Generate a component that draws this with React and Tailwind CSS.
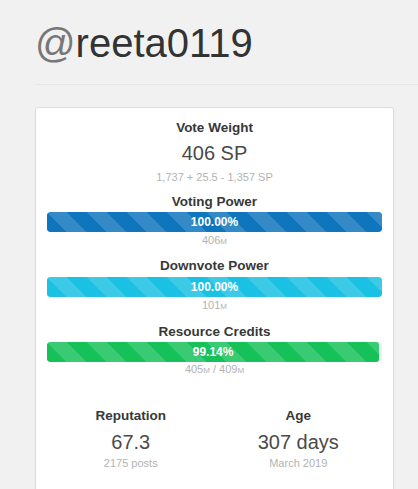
import React from "react";

const stripe =
  "bg-[image:linear-gradient(45deg,rgba(255,255,255,.15)_25%,transparent_25%,transparent_50%,rgba(255,255,255,.15)_50%,rgba(255,255,255,.15)_75%,transparent_75%,transparent)] bg-[length:40px_40px]";

function Bar({ pct, color, track, label }) {
  return (
    <div className={`h-[20px] w-full rounded-[3px] overflow-hidden ${track}`}>
      <div
        className={`h-full rounded-[3px] ${color} ${stripe} text-white text-[12px] font-bold leading-[20px] text-center`}
        style={{ width: pct + "%" }}
      >
        {label}
      </div>
    </div>
  );
}

function M() {
  return <span className="text-[8px]">M</span>;
}

export default function App() {
  return (
    <div
      className="min-h-[489px] bg-[#f1f1f1] pl-[35px] overflow-hidden"
      style={{ fontFamily: '"Liberation Sans", Arial, Helvetica, sans-serif' }}
    >
      <div className="pt-[21px] pb-[19px] border-b border-[#e6e6e6]">
        <h1 className="text-[40px] leading-[44px] text-[#333]">
          <span className="text-[#777]">@</span>reeta0119
        </h1>
      </div>
      <div className="mt-[22px] w-[359px] bg-white border border-[#dcdcdc] rounded-[3px] shadow-[0_1px_2px_rgba(0,0,0,0.06)] px-[11px] pt-[11px] pb-[40px] text-center">
        <div className="text-[13.5px] font-bold leading-[18px] text-[#383838]">Vote Weight</div>
        <div className="mt-[4px] text-[20px] leading-[24px] text-[#4a4a4a]">406 SP</div>
        <div className="mt-[5px] text-[11px] leading-[14px] text-[#b3b3b3]">1,737 + 25.5 - 1,357 SP</div>

        <div className="mt-[9px] text-[13.5px] font-bold leading-[18px] text-[#383838]">Voting Power</div>
        <div className="mt-[1px]">
          <Bar pct={100} color="bg-[#0f76bd]" track="bg-[#f5f5f5]" label="100.00%" />
        </div>
        <div className="mt-[1px] text-[11px] leading-[14px] text-[#b3b3b3]">
          406<M />
        </div>

        <div className="mt-[8px] text-[13.5px] font-bold leading-[18px] text-[#383838]">Downvote Power</div>
        <div className="mt-[2px]">
          <Bar pct={100} color="bg-[#1bc1e3]" track="bg-[#f5f5f5]" label="100.00%" />
        </div>
        <div className="mt-[1px] text-[11px] leading-[14px] text-[#b3b3b3]">
          101<M />
        </div>

        <div className="mt-[9px] text-[13.5px] font-bold leading-[18px] text-[#383838]">Resource Credits</div>
        <div className="mt-[1px]">
          <Bar pct={99.14} color="bg-[#16c15a]" track="bg-[#e3f7ea]" label="99.14%" />
        </div>
        <div className="text-[11px] leading-[14px] text-[#b3b3b3]">
          405<M /> / 409<M />
        </div>

        <div className="mt-[29px] flex justify-center">
          <div className="w-[184px]">
            <div className="text-[13.5px] font-bold leading-[18px] text-[#383838]">Reputation</div>
            <div className="mt-[5px] text-[20px] leading-[24px] text-[#4a4a4a]">67.3</div>
            <div className="mt-[2px] text-[11px] leading-[14px] text-[#b3b3b3]">2175 posts</div>
          </div>
          <div className="w-[184px]">
            <div className="text-[13.5px] font-bold leading-[18px] text-[#383838]">Age</div>
            <div className="mt-[5px] text-[20px] leading-[24px] text-[#4a4a4a]">307 days</div>
            <div className="mt-[2px] text-[11px] leading-[14px] text-[#b3b3b3]">March 2019</div>
          </div>
        </div>
      </div>
    </div>
  );
}
